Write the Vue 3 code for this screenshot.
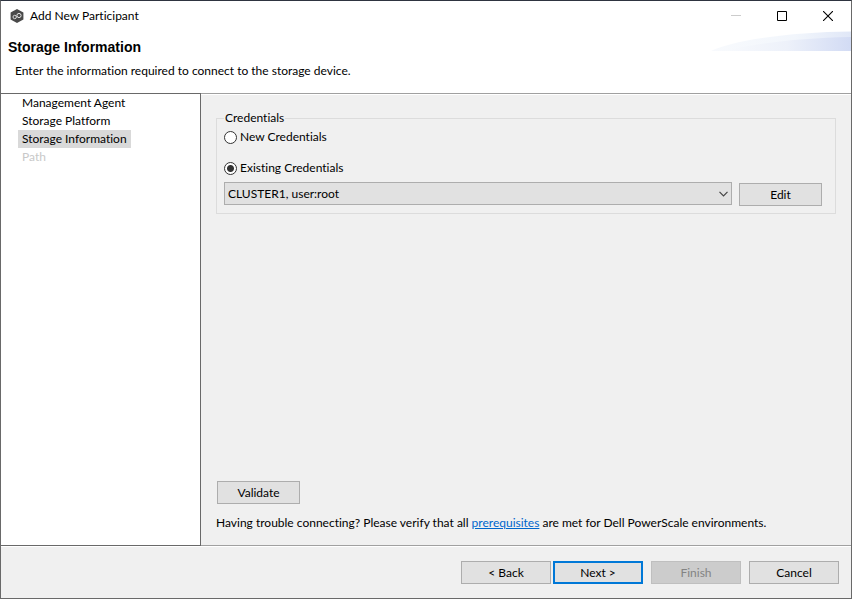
<script setup>
import { ref } from 'vue'

const steps = [
  { name: 'Management Agent' },
  { name: 'Storage Platform' },
  { name: 'Storage Information', current: true },
  { name: 'Path', disabled: true },
]
const mode = ref('existing')
const credential = ref('CLUSTER1, user:root')
</script>

<template>
  <div class="window">
    <header class="titlebar">
      <svg class="app-icon" viewBox="0 0 14 14" aria-hidden="true">
        <path d="M7 0 13.4 3.4V10.6L7 14 .6 10.6V3.4Z" fill="#4a4a4a" />
        <circle cx="4.7" cy="8" r="1.7" fill="none" stroke="#d8d8d8" />
        <circle cx="9" cy="6.5" r="2.1" fill="none" stroke="#e6e6e6" />
      </svg>
      <span class="caption">Add New Participant</span>
      <button class="sys" type="button" aria-label="Minimize" disabled>
        <svg viewBox="0 0 10 10"><path d="M0 4.5H10" stroke="#cccccc" /></svg>
      </button>
      <button class="sys" type="button" aria-label="Maximize">
        <svg viewBox="0 0 10 10"><path d="M.5 .5H9.5V9.5H.5Z" stroke="#000" fill="none" /></svg>
      </button>
      <button class="sys" type="button" aria-label="Close">
        <svg viewBox="0 0 10 10"><path d="M0 0 10 10M10 0 0 10" stroke="#000" stroke-width="1.1" /></svg>
      </button>
    </header>

    <section class="banner">
      <div class="banner-text">
        <h1>Storage Information</h1>
        <p>Enter the information required to connect to the storage device.</p>
      </div>
      <svg class="swoosh" viewBox="0 0 140 20" aria-hidden="true">
        <defs>
          <linearGradient id="outer" x1="0" x2="1">
            <stop offset="0" stop-color="#f8fafd" />
            <stop offset=".6" stop-color="#f2f6fc" />
            <stop offset="1" stop-color="#e0e7f7" />
          </linearGradient>
          <linearGradient id="inner" x1="0" x2="1">
            <stop offset="0" stop-color="#f8fafd" />
            <stop offset=".5" stop-color="#edf1fa" />
            <stop offset="1" stop-color="#d2dbf4" />
          </linearGradient>
        </defs>
        <path d="M0 20C22 9 80 1 140 .5V20Z" fill="url(#outer)" />
        <path d="M12 20C45 12 90 7 140 6V20Z" fill="url(#inner)" />
      </svg>
    </section>

    <div class="body">
      <nav class="steps">
        <ul>
          <li v-for="s in steps" :key="s.name">
            <span class="step" :class="{ current: s.current, disabled: s.disabled }">{{ s.name }}</span>
          </li>
        </ul>
      </nav>
      <main class="page">
        <fieldset>
          <legend>Credentials</legend>
          <label class="radio">
            <input v-model="mode" type="radio" name="mode" value="new" />New Credentials
          </label>
          <label class="radio">
            <input v-model="mode" type="radio" name="mode" value="existing" />Existing Credentials
          </label>
          <div class="row">
            <div class="combo">
              <select v-model="credential" aria-label="Existing Credentials">
                <option>CLUSTER1, user:root</option>
              </select>
              <svg class="chevron" viewBox="0 0 9 6" aria-hidden="true">
                <path d="M.5 .8 4.5 4.8 8.5 .8" fill="none" stroke="#444" stroke-width="1.2" />
              </svg>
            </div>
            <button class="btn small" type="button">Edit</button>
          </div>
        </fieldset>
        <div class="actions">
          <button class="btn small" type="button">Validate</button>
        </div>
        <p class="hint">
          Having trouble connecting? Please verify that all <a href="#">prerequisites</a> are met for Dell PowerScale environments.
        </p>
      </main>
    </div>

    <footer class="footer">
      <div class="pair">
        <button class="btn" type="button">&lt; Back</button>
        <button class="btn default" type="button">Next &gt;</button>
      </div>
      <button class="btn" type="button" disabled>Finish</button>
      <button class="btn" type="button">Cancel</button>
    </footer>
  </div>
</template>

<style>
body {
  margin: 0;
  background: #f0f0f0;
}
</style>

<style scoped>
* {
  box-sizing: border-box;
}
.window {
  display: flex;
  flex-direction: column;
  min-height: 100vh;
  border: 1px solid #696969;
  border-top-color: #2e3440;
  background: #f0f0f0;
  color: #000;
  font-family: Lato, "Noto Sans", sans-serif;
  font-size: 12px;
  font-variant-ligatures: none;
  line-height: 18px;
}
button,
select {
  font: inherit;
  color: inherit;
}
.titlebar {
  display: flex;
  align-items: center;
  height: 29px;
  padding-left: 9px;
  background: #fff;
}
.app-icon {
  width: 14px;
  height: 14px;
  margin-right: 6px;
}
.caption {
  flex: 1;
}
.sys {
  display: flex;
  align-items: center;
  justify-content: center;
  width: 46px;
  height: 28px;
  padding: 0;
  border: 0;
  background: none;
}
.sys svg {
  width: 10px;
  height: 10px;
}
.banner {
  display: flex;
  justify-content: space-between;
  height: 63px;
  background: #fff;
}
.banner-text {
  padding: 8px 0 0 7px;
}
h1 {
  margin: 0;
  font: bold 14px/18px "Liberation Sans", Arial, sans-serif;
}
.banner p {
  margin: 6px 0 0 7px;
}
.swoosh {
  width: 140px;
  height: 20px;
  margin-top: 1px;
}
.body {
  flex: 1;
  display: flex;
}
.steps {
  width: 200px;
  border: solid #696969;
  border-width: 1px 1px 1px 0;
  background: #fff;
}
.steps ul {
  margin: 0;
  padding: 0 0 0 17px;
  list-style: none;
}
.step {
  display: inline-block;
  padding: 0 4px;
  vertical-align: top;
}
.current {
  background: #d9d9d9;
}
.disabled {
  color: #c8c8c8;
}
.page {
  flex: 1;
  display: flex;
  flex-direction: column;
  align-items: flex-start;
  padding: 15px 15px 13px;
  border: solid #a0a0a0;
  border-width: 1px 0;
  box-shadow: inset 0 1px #fff;
}
fieldset {
  width: 100%;
  min-width: 0;
  margin: 0;
  padding: 1px 13px 7px 7px;
  border: 1px solid #dcdcdc;
}
legend {
  padding: 0 1px;
}
.radio {
  display: flex;
  align-items: center;
  width: max-content;
  gap: 3px;
}
.radio + .radio {
  margin-top: 13px;
}
.radio input {
  appearance: none;
  width: 13px;
  height: 13px;
  margin: 0;
  border: 1px solid #333;
  border-radius: 50%;
  background: #fff;
}
.radio input:checked {
  background: radial-gradient(circle, #333 3px, #fff 4px);
}
.row {
  display: flex;
  align-items: flex-end;
  gap: 7px;
  margin-top: 5px;
}
.combo {
  flex: 1;
  position: relative;
  padding-bottom: 1px;
}
select {
  appearance: none;
  display: block;
  width: 100%;
  height: 23px;
  padding: 0 20px 0 3px;
  border: 1px solid #adadad;
  border-radius: 0;
  background: #e1e1e1;
}
.chevron {
  position: absolute;
  top: 9px;
  right: 4px;
  width: 9px;
  height: 6px;
  pointer-events: none;
}
.btn {
  width: 90px;
  height: 23px;
  padding: 0;
  border: 1px solid #adadad;
  border-radius: 0;
  background: #e1e1e1;
  line-height: 21px;
}
.btn.small {
  width: 83px;
}
.btn.default {
  border: 2px solid #0078d7;
  line-height: 19px;
}
.btn:disabled {
  border-color: #bfbfbf;
  background: #ccc;
  color: #838383;
}
.actions {
  display: flex;
  margin-top: auto;
  padding: 0 1px;
}
.hint {
  margin: 10px 0 0;
}
.hint a {
  color: #0066cc;
}
.footer {
  display: flex;
  justify-content: flex-end;
  gap: 8px;
  padding: 14px 12px;
  border-top: 1px solid #fff;
}
.pair {
  display: flex;
  gap: 2px;
}
</style>
